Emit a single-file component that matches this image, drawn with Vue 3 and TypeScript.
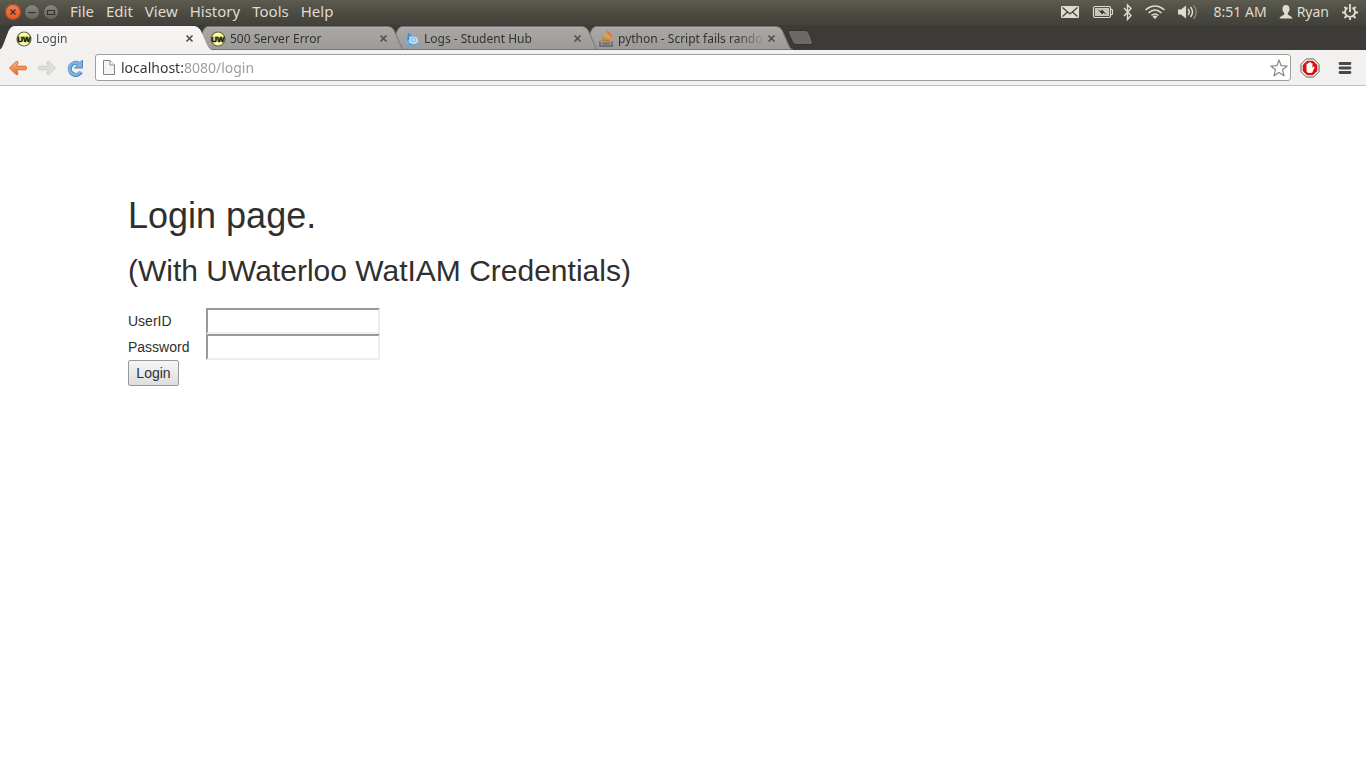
<script setup lang="ts">
import { ref } from 'vue'

interface Tab {
  title: string
  icon: 'uw' | 'hub' | 'stack'
}

const menus: string[] = ['File', 'Edit', 'View', 'History', 'Tools', 'Help']
const tabs: Tab[] = [
  { title: 'Login', icon: 'uw' },
  { title: '500 Server Error', icon: 'uw' },
  { title: 'Logs - Student Hub', icon: 'hub' },
  { title: 'python - Script fails rando', icon: 'stack' },
]
const active = ref(0)
const address = ref('localhost:8080/login')
const userId = ref('')
const password = ref('')
</script>

<template>
  <div class="window">
    <header class="menubar">
      <div class="controls">
        <button class="ctl close" aria-label="Close window">
          <svg width="16" height="16" viewBox="0 0 16 16"><path d="M5.500 5.500l5 5m0-5l-5 5" /></svg>
        </button>
        <button class="ctl" aria-label="Minimize window">
          <svg width="16" height="16" viewBox="0 0 16 16"><path d="M4.500 8.500h7" /></svg>
        </button>
        <button class="ctl" aria-label="Maximize window">
          <svg width="16" height="16" viewBox="0 0 16 16"><path d="M4.500 6.500h7v4h-7z" /></svg>
        </button>
      </div>
      <nav class="menus">
        <button v-for="m in menus" :key="m" class="menu">{{ m }}</button>
      </nav>
      <div class="indicators">
        <svg class="mail" width="20" height="14" viewBox="0 0 20 14">
          <rect x="1" y="1" width="18" height="12" rx="1" fill="#dfdbd2" />
          <path d="M2.500 2.500L10 9l7.500-6.500M2.500 11.500l5-4.500M17.500 11.500l-5-4.500" fill="none" stroke="#45443e" stroke-width="1.300" />
        </svg>
        <svg class="battery" width="22" height="14" viewBox="0 0 22 14">
          <rect x="1.500" y="1.500" width="17" height="11" rx="1.500" fill="none" stroke="#dfdbd2" stroke-width="1.200" />
          <rect x="3" y="3" width="14" height="8" fill="#c9c5bd" />
          <path d="M19 4.500h1.500v5H19" fill="none" stroke="#dfdbd2" />
          <path d="M5.500 4l3.500 2.200 1-1.700 5 5.500-3.700-2.200-1 1.700z" fill="#33322e" />
        </svg>
        <svg class="bluetooth" width="10" height="18" viewBox="0 0 10 18">
          <path d="M1 5l7 7.500-3.500 4V2L8 5.500 1 13" fill="none" stroke="#dfdbd2" stroke-width="1.400" />
        </svg>
        <svg class="wifi" width="22" height="16" viewBox="0 0 22 16">
          <g fill="none" stroke="#dfdbd2" stroke-width="1.600">
            <path d="M1.500 6Q11-2 20.500 6" />
            <path d="M4.500 9Q11 3 17.500 9" />
            <path d="M7.500 11.500Q11 8.500 14.500 11.500" />
          </g>
          <path d="M8.500 12.500Q11 10.500 13.500 12.500L11 15z" fill="#dfdbd2" />
        </svg>
        <svg class="sound" width="21" height="16" viewBox="0 0 21 16">
          <path d="M1 5.500h3l5-4v13l-5-4H1z" fill="#dfdbd2" />
          <g fill="none" stroke-width="1.500">
            <path d="M11 5q2.500 3 0 6" stroke="#dfdbd2" />
            <path d="M13.500 3q4 5 0 10" stroke="#dfdbd2" />
            <path d="M16.500 1q5.500 7 0 14" stroke="#85827a" />
          </g>
        </svg>
        <span class="clock">8:51 AM</span>
        <svg class="person" width="14" height="14" viewBox="0 0 14 14">
          <path d="M7 0C4.500 0 3.500 1.500 3.500 4c0 2 1 3 1.700 4.200V9.500C4.500 10.500 1 11 .5 13.500h13C13 11 9.500 10.500 8.800 9.500V8.200C9.500 7 10.500 6 10.500 4 10.500 1.500 9.500 0 7 0z" fill="#dfdbd2" />
        </svg>
        <span class="user">Ryan</span>
        <svg class="gear" width="18" height="18" viewBox="0 0 18 18">
          <path d="M6.500 4.600A5 5 0 1 0 11.500 4.600" fill="none" stroke="#dfdbd2" stroke-width="1.800" />
          <path d="M9 1v8M1 9.500h3M14 9.500h3M9 14.500v2.500M3.300 3.800l2 2M14.700 3.800l-2 2M3.500 15l2-2M14.500 15l-2-2" stroke="#dfdbd2" stroke-width="1.900" />
        </svg>
      </div>
    </header>

    <div class="tabstrip">
      <div
        v-for="(t, i) in tabs"
        :key="t.title"
        class="tab"
        :class="{ active: i === active }"
        :style="{ zIndex: i === active ? 10 : tabs.length - i }"
        @click="active = i"
      >
        <svg class="shape" width="211" height="24" viewBox="0 0 211 24">
          <defs>
            <linearGradient :id="'tab' + i" x1="0" y1="0" x2="0" y2="1">
              <stop offset="0" :stop-color="i === active ? '#f7f6f5' : '#aaa9a7'" />
              <stop offset="1" :stop-color="i === active ? '#f2f1f0' : '#9b9a98'" />
            </linearGradient>
          </defs>
          <path
            d="M0 24C2 23 3 20 4 18L9 5Q11 .5 14 .5H194Q198 .5 200 4L207 20Q208.500 23.500 211 24z"
            :fill="`url(#tab${i})`"
          />
          <path
            d="M0 24C2 23 3 20 4 18L9 5Q11 .5 14 .5H194Q198 .5 200 4L207 20Q208.500 23.500 211 24"
            fill="none"
            :stroke="i === active ? '#f7f6f5' : '#777570'"
          />
          <path v-if="i !== active" d="M13 1.500H195" stroke="#b2b1af" />
          <path v-if="i !== active" d="M1 23.500H210" stroke="#75736f" />
        </svg>
        <span class="favicon">
          <svg v-if="t.icon === 'uw'" width="16" height="16" viewBox="0 0 16 16">
            <circle cx="8" cy="8" r="7" fill="#fafabb" stroke="#6b6a35" stroke-width="1.200" />
            <path d="M2.500 8h11" stroke="#e8e66a" stroke-width="6" />
            <text x="8" y="11" text-anchor="middle" font-family="Liberation Sans, sans-serif" font-size="8" font-weight="bold" fill="#111" stroke="#111" stroke-width=".4">UW</text>
          </svg>
          <svg v-else-if="t.icon === 'hub'" width="16" height="16" viewBox="0 0 16 16">
            <path d="M3 9.500L4.500 1.500 8 5h3l3 4-3 5H5z" fill="#2f8fd4" />
            <path d="M5 4.500l.5 4 2-3z" fill="#8ec8ec" />
            <path d="M0 10.500l5-1.500 3 4-5 1-1-2z" fill="#68b3e4" />
            <path d="M12 12l4-2-1.500 3.500z" fill="#69b4e4" />
            <ellipse cx="9.500" cy="9.500" rx="4.500" ry="4.300" fill="#c3ddec" />
            <path d="M5.500 12.500q4 3 8 0" fill="none" stroke="#4c9fd6" />
            <circle cx="9.500" cy="9" r="1.800" fill="#e5f1f8" stroke="#63a9d5" />
          </svg>
          <svg v-else width="16" height="16" viewBox="0 0 16 16">
            <path d="M2 10.500v4.500h12v-4.500" fill="none" stroke="#6f7073" stroke-width="2" />
            <path d="M4 12.500h8" stroke="#6f7073" stroke-width="2" />
            <path d="M4 9l8 1.200" stroke="#a9803f" stroke-width="1.800" />
            <path d="M4.700 6L12.500 8.800" stroke="#df8e2d" stroke-width="1.900" />
            <path d="M6 3l7 4.500" stroke="#f2a32c" stroke-width="1.900" />
            <path d="M9 0l5 5.800" stroke="#ee6d38" stroke-width="1.900" />
          </svg>
        </span>
        <span class="title">{{ t.title }}</span>
        <button class="tab-close" :aria-label="'Close ' + t.title">
          <svg width="9" height="9" viewBox="0 0 9 9"><path d="M1.500 1.500l6 6m0-6l-6 6" stroke="#4e4d4b" stroke-width="1.600" /></svg>
        </button>
      </div>
      <button class="new-tab" aria-label="New tab">
        <svg width="27" height="16" viewBox="0 0 27 16">
          <path d="M3 .5H19Q21 .5 22 3L25.500 12Q26 14.500 24 14.500H9Q6.500 14.500 5.500 12L1.500 3Q.8.500 3 .5z" fill="#6b6a66" stroke="#32312d" />
        </svg>
      </button>
    </div>

    <div class="toolbar">
      <button class="tool back" aria-label="Back">
        <svg width="20" height="18" viewBox="0 0 20 18">
          <defs><linearGradient id="orange" x1="0" y1="0" x2="0" y2="1"><stop offset="0" stop-color="#f8b47d" /><stop offset="1" stop-color="#e9702f" /></linearGradient></defs>
          <path d="M1.500 9L8 2.500Q10 1.500 10 4L8.500 7.200H17.500Q18.500 7.200 18.500 9T17.500 10.800H8.500L10 14Q10 16.500 8 15.500z" fill="url(#orange)" stroke="#dc6c30" stroke-linejoin="round" />
        </svg>
      </button>
      <button class="tool forward" aria-label="Forward">
        <svg width="20" height="18" viewBox="0 0 20 18">
          <path d="M18.500 9L12 2.500Q10 1.500 10 4L11.500 7.200H2.500Q1.500 7.200 1.500 9T2.500 10.800H11.500L10 14Q10 16.500 12 15.500z" fill="#dededc" stroke="#cdccca" stroke-linejoin="round" />
        </svg>
      </button>
      <button class="tool reload" aria-label="Reload">
        <svg width="18" height="18" viewBox="0 0 18 18">
          <path d="M15 13A6 6 0 1 1 12.500 4.500" fill="none" stroke="#5088c0" stroke-width="4.200" />
          <path d="M16.500 1v8H8.500z" fill="#7fb3e2" stroke="#5088c0" stroke-linejoin="round" />
          <path d="M14.500 12.500A6 6 0 1 1 13 5" fill="none" stroke="#7fb3e2" stroke-width="2.600" />
        </svg>
      </button>
      <div class="omnibox">
        <svg width="14" height="17" viewBox="0 0 14 17">
          <path d="M1.500 1.500H8L12.500 6V15.500H1.500z" fill="#f5f5f5" stroke="#858585" />
          <path d="M8 1.500V6H12.500" fill="#fff" stroke="#858585" />
        </svg>
        <input v-model="address" class="address" type="text" aria-label="Address" spellcheck="false" />
        <button class="star" aria-label="Bookmark this page">
          <svg width="20" height="20" viewBox="0 0 20 20">
            <path d="M10 2l2.200 5.700 6 .3-4.700 3.800 1.600 6L10 14.500 4.900 17.800l1.600-6L1.800 8l6-.3z" fill="#fff" stroke="#858585" stroke-width="1.200" stroke-linejoin="round" />
          </svg>
        </button>
      </div>
      <button class="tool block" aria-label="Ad blocker">
        <svg width="20" height="20" viewBox="0 0 20 20">
          <path d="M6.300 1h7.400L19 6.300v7.400L13.700 19H6.300L1 13.700V6.300z" fill="#fff" stroke="#5b5b5b" />
          <path d="M7 2.700h6L17.300 7v6L13 17.300H7L2.700 13V7z" fill="#d9100f" />
          <path d="M6.500 10V6q.7-1 1.400 0V5q.8-1 1.500 0V4.500q.8-1 1.600 0V5.500q.8-1 1.500 0V10l1-1.300q1.300-.5 1 .8L12.500 14q-.5 1-1.500 1H9q-2 0-2.500-2z" fill="#fff" />
        </svg>
      </button>
      <button class="tool more" aria-label="Menu">
        <svg width="14" height="14" viewBox="0 0 14 14"><path d="M2 2.500h10M2 7h10M2 11.500h10" stroke="#494949" stroke-width="2.800" stroke-linecap="round" /></svg>
      </button>
    </div>

    <main class="page">
      <h1>Login page.</h1>
      <h2>(With UWaterloo WatIAM Credentials)</h2>
      <form class="form" @submit.prevent>
        <label for="userid">UserID</label>
        <input id="userid" v-model="userId" type="text" />
        <label for="password">Password</label>
        <input id="password" v-model="password" type="password" />
        <button type="submit">Login</button>
      </form>
    </main>
  </div>
</template>

<style>
body {
  margin: 0;
  background: #fff;
}
</style>

<style scoped>
.window {
  font-family: 'Noto Sans', 'Open Sans', sans-serif;
}
svg {
  display: block;
  flex: none;
}
button {
  font: inherit;
  color: inherit;
  background: none;
  border: 0;
  padding: 0;
}
.menubar {
  display: flex;
  align-items: center;
  box-sizing: border-box;
  height: 25px;
  padding: 0 7px 1px 5px;
  background: linear-gradient(#5d5b4f, #47463f 70%, #42413c);
  color: #dfdbd2;
  font-size: 14px;
  line-height: 24px;
}
.controls {
  display: flex;
  gap: 3px;
}
.ctl {
  border-radius: 50%;
  background: linear-gradient(#8b8981, #65635c);
  box-shadow: inset 0 0 0 1px #45443e;
}
.ctl path {
  fill: none;
  stroke: #33322d;
  stroke-width: 1.2;
}
.ctl.close {
  background: linear-gradient(#f58052, #ec5420);
  box-shadow: inset 0 0 0 1px #8f4a30;
}
.menus {
  display: flex;
  gap: 12px;
  margin-left: 11px;
  padding-bottom: 2px;
  font-size: 15px;
}
.indicators {
  display: flex;
  align-items: center;
  margin-left: auto;
}
.battery {
  margin-left: 12px;
}
.bluetooth {
  margin-left: 9px;
}
.wifi {
  margin-left: 11px;
}
.sound {
  margin-left: 11px;
}
.clock {
  margin-left: 16px;
}
.person {
  margin-left: 12px;
}
.user {
  margin-left: 4px;
}
.gear {
  margin-left: 12px;
}
.tabstrip {
  display: flex;
  height: 24px;
  padding-top: 1px;
  background: #3c3b37;
  font-size: 12px;
  isolation: isolate;
}
.tab {
  position: relative;
  display: flex;
  align-items: center;
  box-sizing: border-box;
  width: 211px;
  height: 24px;
  margin-right: -17px;
  padding: 1px 17px 0 16px;
  color: #33322d;
}
.tab.active {
  color: #4c4c4c;
}
.shape {
  position: absolute;
  left: 0;
  top: 0;
}
.favicon,
.title,
.tab-close {
  position: relative;
}
.title {
  flex: 1;
  margin-left: 4px;
  white-space: nowrap;
  line-height: 23px;
  mask-image: linear-gradient(90deg, #000 118px, transparent 148px);
}
.new-tab {
  align-self: flex-start;
  margin: 4px 0 0 10px;
  padding-left: 1px;
}
.toolbar {
  display: flex;
  align-items: center;
  box-sizing: border-box;
  height: 36px;
  padding: 0 14px 0 8px;
  background: #f2f1f0;
  border-bottom: 1px solid #c3c1bf;
}
.forward {
  margin-left: 9px;
}
.reload {
  margin-left: 9px;
}
.omnibox {
  display: flex;
  flex: 1;
  align-items: center;
  box-sizing: border-box;
  height: 27px;
  margin-left: 11px;
  padding: 0 1px 0 6px;
  background: #fff;
  border: 1px solid #a09e9b;
  border-radius: 3px;
}
.address {
  flex: 1;
  min-width: 0;
  height: 25px;
  margin-left: 5px;
  padding: 0;
  border: 0;
  outline: 0;
  font: 14px/24px 'Noto Sans', 'Open Sans', sans-serif;
  background: linear-gradient(90deg, #333 62px, #999 62px);
  background-clip: text;
  color: transparent;
  caret-color: #333;
}
.block {
  margin-left: 9px;
}
.more {
  margin-left: 18px;
}
.page {
  padding: 110px 128px 0;
  color: #2f2f2f;
  font-family: 'Liberation Sans', Arial, sans-serif;
}
h1,
h2 {
  margin: 0;
  font-weight: 400;
}
h1 {
  font-size: 36px;
  line-height: 40px;
}
h2 {
  margin: 18px 0 20px;
  font-size: 30px;
  line-height: 34px;
}
.form {
  display: grid;
  grid-template-columns: 78px 174px;
  font-size: 14px;
  line-height: 26px;
}
.form input {
  box-sizing: border-box;
  height: 26px;
  padding: 1px 2px;
  border: 2px solid;
  border-color: #999 #eee #eee #999;
  font: inherit;
}
.form button {
  justify-self: start;
  box-sizing: border-box;
  min-width: 51px;
  height: 26px;
  padding: 0 7px;
  border: 1px solid #999;
  border-radius: 2px;
  background: linear-gradient(#f6f6f6, #dedede);
  line-height: 24px;
}
</style>
